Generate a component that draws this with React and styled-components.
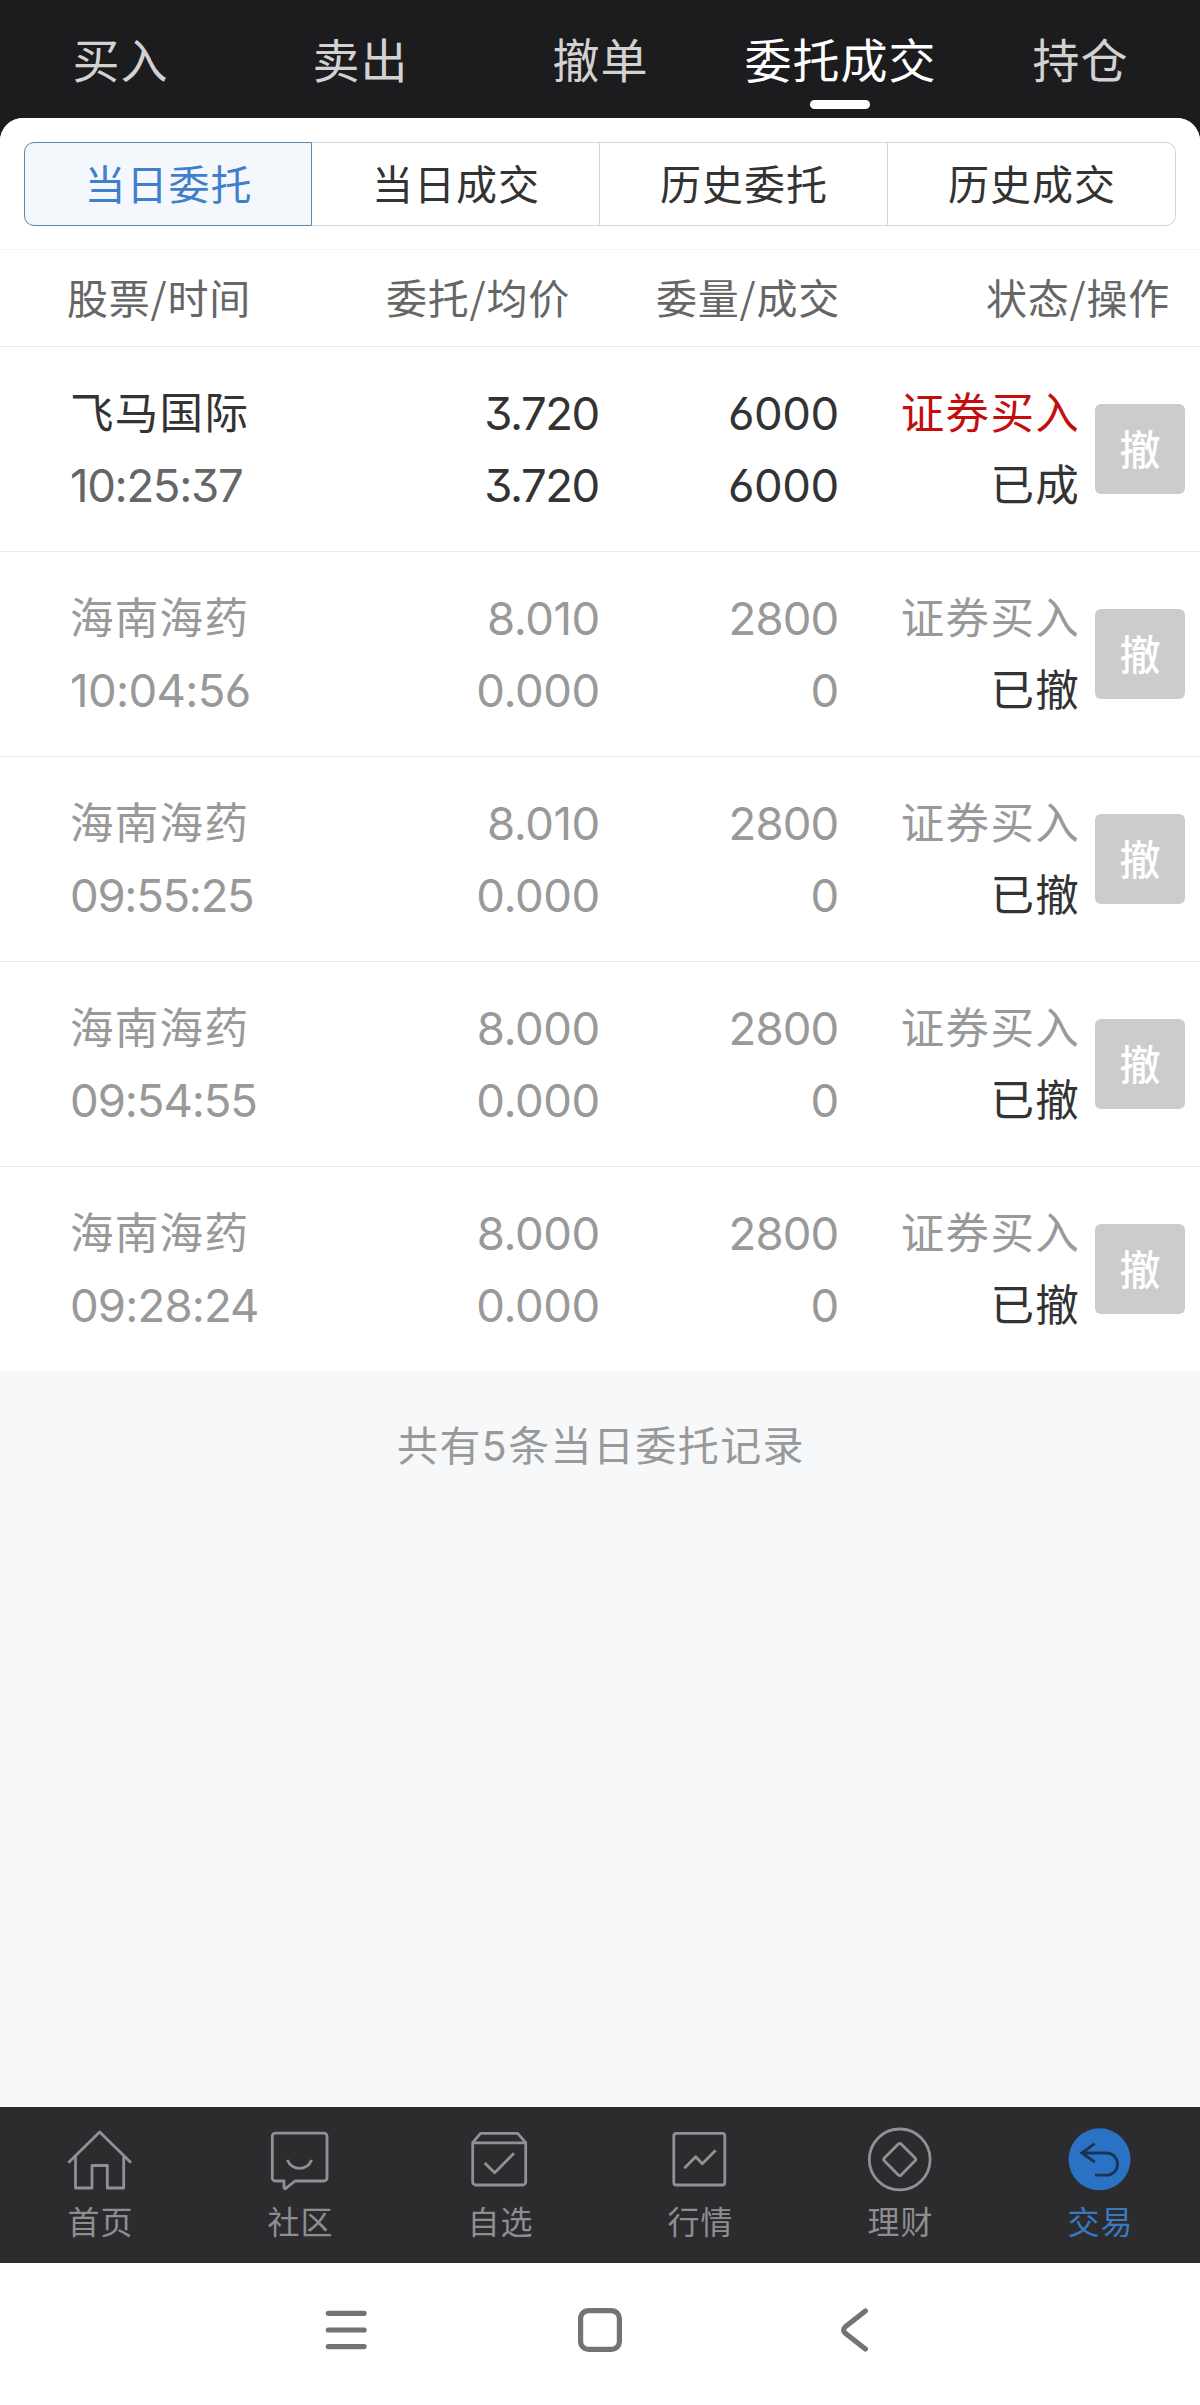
import React from 'react';
import styled, { createGlobalStyle, css } from 'styled-components';

const GlobalStyle = createGlobalStyle`
  * { box-sizing: border-box; }
  body {
    margin: 0;
    background: #1c1c1e;
    font-family: Inter, "Noto Sans CJK SC", sans-serif;
    font-feature-settings: "cv09", "cv03";
  }
  button {
    font: inherit;
    border: 0;
    padding: 0;
    background: none;
    white-space: nowrap;
  }
`;

const cjkText = css`
  font-family: "Noto Sans CJK SC", sans-serif;
  white-space: nowrap;
`;

const Screen = styled.div`
  width: 1200px;
  height: 2405px;
  display: flex;
  flex-direction: column;
`;

const TopTabs = styled.nav`
  flex: none;
  height: 118px;
  display: grid;
  grid-template-columns: repeat(5, 240px);
`;

const TopTab = styled.button`
  && { ${cjkText} }
  position: relative;
  display: flex;
  justify-content: center;
  font-size: 47px;
  line-height: 116px;
  letter-spacing: 1px;
  padding-left: 1px;
  color: ${(p) => (p.$active ? '#ffffff' : '#d2d2d2')};
  ${(p) =>
    p.$active &&
    css`
      &::after {
        content: '';
        position: absolute;
        left: 90px;
        top: 100px;
        width: 60px;
        height: 9px;
        border-radius: 4.5px;
        background: #ffffff;
      }
    `}
`;

const Panel = styled.main`
  flex: 1;
  display: flex;
  flex-direction: column;
  border-radius: 23px 23px 0 0;
  overflow: hidden;
  background: #f6f8fa;
`;

const SegmentBar = styled.div`
  height: 132px;
  padding: 24px 24px 0;
  background: #ffffff;
  border-bottom: 1px solid #f6f6f6;
  display: grid;
  grid-template-columns: repeat(4, 288px);
  align-items: start;
`;

const Segment = styled.button`
  && { ${cjkText} }
  height: 84px;
  font-size: 41px;
  line-height: 60px;
  letter-spacing: 1px;
  padding: 0 0 4px 1px;
  text-align: center;
  color: ${(p) => (p.$active ? '#3f7fcb' : '#333333')};
  background: ${(p) => (p.$active ? '#f4f8fd' : '#ffffff')};
  border: 1px solid ${(p) => (p.$active ? '#5a87a6' : '#d6d8d9')};
  border-left-width: ${(p) => (p.$active ? '1px' : '0')};
  &:first-child { border-radius: 10px 0 0 10px; }
  &:last-child { border-radius: 0 10px 10px 0; }
`;

const TableHead = styled.div`
  height: 97px;
  background: #ffffff;
  border-bottom: 1px solid #ebebeb;
  display: grid;
  grid-template-columns: 386px 270px 330px 214px;
  align-items: center;
  padding-bottom: 4px;
`;

const HeadCell = styled.div`
  ${cjkText}
  font-size: 41px;
  line-height: 60px;
  letter-spacing: 0.8px;
  color: #666666;
  &:first-child { padding-left: 67px; }
`;

const Row = styled.div`
  height: ${(p) => (p.$last ? '204px' : '205px')};
  background: #ffffff;
  display: grid;
  grid-template-columns: 340px 260px 239px 240px 90px;
  align-items: center;
  border-bottom: ${(p) => (p.$last ? '0' : '1px solid #ebebeb')};
  color: ${(p) => (p.$done ? '#333333' : '#999999')};
`;

const Cell = styled.div`
  display: flex;
  flex-direction: column;
  align-items: ${(p) => (p.$start ? 'flex-start' : 'flex-end')};
  padding-left: ${(p) => (p.$start ? '70px' : '0')};
`;

const Words = styled.span`
  ${cjkText}
  font-size: 43.5px;
  height: 72px;
  line-height: 67px;
  letter-spacing: 1.3px;
  margin-right: -1px;
  color: ${(p) => p.$color || 'inherit'};
`;

const Figure = styled.span`
  font-size: 45.5px;
  height: 72px;
  line-height: 73px;
  letter-spacing: ${(p) => p.$tracking}px;
  margin-right: ${(p) => -p.$tracking - 0.3}px;
  color: ${(p) => p.$color || 'inherit'};
  white-space: nowrap;
`;

const CancelButton = styled.button`
  && { ${cjkText} }
  margin-left: 16px;
  width: 90px;
  height: 90px;
  padding-bottom: 4px;
  border-radius: 6px;
  background: #cccccc;
  color: #ffffff;
  font-size: 41px;
  font-weight: 500;
  line-height: 60px;
`;

const Summary = styled.p`
  margin: 45px 0 0;
  text-align: center;
  font-size: 41px;
  line-height: 60px;
  letter-spacing: 1.4px;
  padding-left: 2px;
  color: #999999;
`;

const BottomTabs = styled.nav`
  flex: none;
  height: 156px;
  background: #2c2c2e;
  display: grid;
  grid-template-columns: repeat(6, 200px);
`;

const BottomTab = styled.button`
  && { ${cjkText} }
  display: flex;
  flex-direction: column;
  align-items: center;
  justify-content: flex-start;
  padding-top: 20px;
  color: ${(p) => (p.$active ? '#3b78bf' : '#8e8e92')};
`;

const TabIcon = styled.svg`
  display: block;
  width: 66px;
  height: 66px;
  fill: none;
  stroke: #919195;
  stroke-width: 2.8;
  stroke-linejoin: round;
`;

const TabLabel = styled.span`
  font-size: 32px;
  line-height: 46px;
  letter-spacing: 1px;
  margin: 4px -1px 0 0;
`;

const SystemBar = styled.footer`
  flex: none;
  height: 142px;
  background: #ffffff;
  display: flex;
  align-items: center;
  justify-content: center;
  gap: 206px;
  padding-bottom: 8px;
`;

const SystemIcon = styled.svg`
  width: 48px;
  height: 48px;
  fill: none;
  stroke: #737373;
  stroke-width: 5.2;
  stroke-linecap: round;
  stroke-linejoin: round;
`;

const topTabs = ['买入', '卖出', '撤单', '委托成交', '持仓'];
const segments = ['当日委托', '当日成交', '历史委托', '历史成交'];
const headings = ['股票/时间', '委托/均价', '委量/成交', '状态/操作'];

const orders = [
  { name: '飞马国际', time: '10:25:37', price: '3.720', avg: '3.720', qty: '6000', filled: '6000', status: '已成', done: true },
  { name: '海南海药', time: '10:04:56', price: '8.010', avg: '0.000', qty: '2800', filled: '0', status: '已撤' },
  { name: '海南海药', time: '09:55:25', price: '8.010', avg: '0.000', qty: '2800', filled: '0', status: '已撤' },
  { name: '海南海药', time: '09:54:55', price: '8.000', avg: '0.000', qty: '2800', filled: '0', status: '已撤' },
  { name: '海南海药', time: '09:28:24', price: '8.000', avg: '0.000', qty: '2800', filled: '0', status: '已撤' },
];

// Strings heavy in the digits 2, 3, 5 and 7 are set tighter than those made of zeros.
const tracking = (text) => {
  const narrow = (text.match(/[2357]/g) || []).length;
  return -0.4 - (narrow / text.length) * 1.8;
};

const bottomTabs = [
  {
    label: '首页',
    icon: (
      <>
        <path d="M1.3 35.7 32.7 5 64 35.7" />
        <path d="M8.5 29.5V61H25V38.5H40.3V61H56.7V29.5" />
      </>
    ),
  },
  {
    label: '社区',
    icon: (
      <>
        <path d="M8.3 6.2H57a3 3 0 0 1 3 3V51a3 3 0 0 1-3 3H28L18.2 61.8 17 60.5V54H8.3a3 3 0 0 1-3-3V9.2a3 3 0 0 1 3-3Z" />
        <path d="M20.3 33C25.5 44.2 39.5 44.2 44.7 33" />
      </>
    ),
  },
  {
    label: '自选',
    icon: (
      <>
        <path d="M5.7 15.7 13.5 6.3H50.7L58.7 15.7V55a3 3 0 0 1-3 3H8.7a3 3 0 0 1-3-3ZM5.7 15.9H58.7" />
        <path d="M17.7 36 27.7 45.7 47 26.3" />
      </>
    ),
  },
  {
    label: '行情',
    icon: (
      <>
        <rect x="6.8" y="6.3" width="51" height="51.7" rx="2.5" />
        <path d="M17.3 41.3 28.7 29.7 35.3 36.7 48.7 23.3" />
      </>
    ),
  },
  {
    label: '理财',
    icon: (
      <>
        <circle cx="32.7" cy="32.4" r="30.4" />
        <path d="M31.3 17.1a2 2 0 0 1 2.8 0L48.1 31a2 2 0 0 1 0 2.8L34.1 47.9a2 2 0 0 1-2.8 0L17.3 33.8a2 2 0 0 1 0-2.8Z" />
      </>
    ),
  },
  {
    label: '交易',
    active: true,
    icon: (
      <>
        <circle cx="32.5" cy="32.3" r="31" fill="#2b72c5" stroke="none" />
        <path
          d="M27.7 16.7 14.7 26 27.7 35M14.7 26H39.5a11.1 11.1 0 0 1 0 22.2H28"
          stroke="#1c3453"
          strokeLinejoin="miter"
        />
      </>
    ),
  },
];

function Num({ children, color }) {
  return (
    <Figure $tracking={tracking(children)} $color={color}>
      {children}
    </Figure>
  );
}

export default function App() {
  return (
    <Screen>
      <GlobalStyle />
      <TopTabs>
        {topTabs.map((label) => (
          <TopTab key={label} $active={label === '委托成交'}>{label}</TopTab>
        ))}
      </TopTabs>
      <Panel>
        <SegmentBar>
          {segments.map((label, i) => (
            <Segment key={label} $active={i === 0}>{label}</Segment>
          ))}
        </SegmentBar>
        <TableHead>
          {headings.map((label) => (
            <HeadCell key={label}>{label}</HeadCell>
          ))}
        </TableHead>
        {orders.map((o, i) => (
          <Row key={o.time} $done={o.done} $last={i === orders.length - 1}>
            <Cell $start>
              <Words>{o.name}</Words>
              <Num color={o.done ? '#666666' : undefined}>{o.time}</Num>
            </Cell>
            <Cell>
              <Num>{o.price}</Num>
              <Num>{o.avg}</Num>
            </Cell>
            <Cell>
              <Num>{o.qty}</Num>
              <Num>{o.filled}</Num>
            </Cell>
            <Cell>
              <Words $color={o.done ? '#c40d0d' : undefined}>证券买入</Words>
              <Words $color="#333333">{o.status}</Words>
            </Cell>
            <CancelButton>撤</CancelButton>
          </Row>
        ))}
        <Summary>共有5条当日委托记录</Summary>
      </Panel>
      <BottomTabs>
        {bottomTabs.map((t) => (
          <BottomTab key={t.label} $active={t.active}>
            <TabIcon viewBox="0 0 66 66">{t.icon}</TabIcon>
            <TabLabel>{t.label}</TabLabel>
          </BottomTab>
        ))}
      </BottomTabs>
      <SystemBar>
        <SystemIcon viewBox="0 0 48 48">
          <path d="M6.3 7.3H42.1M6.3 24H42.1M6.3 40.6H42.1" />
        </SystemIcon>
        <SystemIcon viewBox="0 0 48 48">
          <rect x="4.6" y="4.6" width="38.8" height="38.8" rx="8" />
        </SystemIcon>
        <SystemIcon viewBox="0 0 48 48">
          <path d="M35.4 5 15.3 20.8Q11.8 24 15.3 27.2L35.4 43" />
        </SystemIcon>
      </SystemBar>
    </Screen>
  );
}
